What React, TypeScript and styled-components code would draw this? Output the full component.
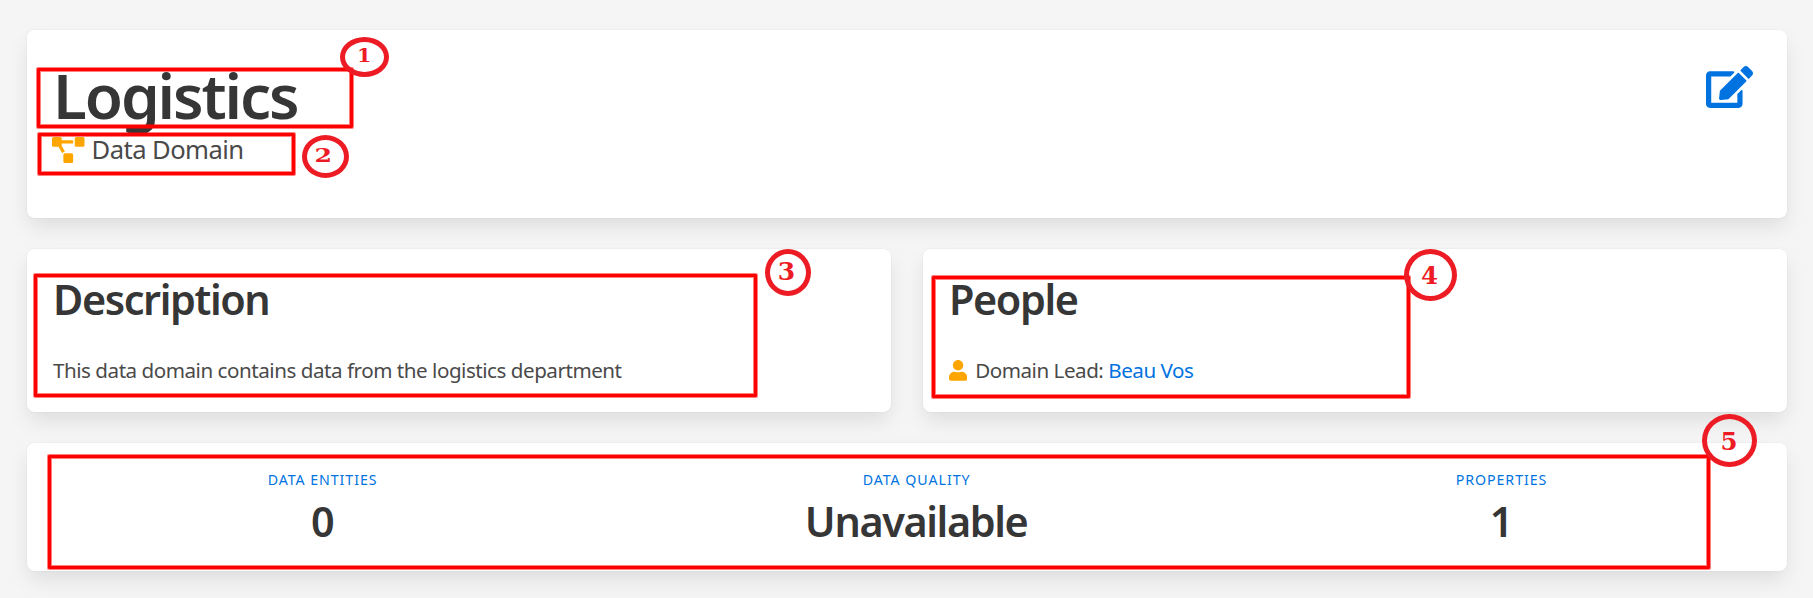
import React from 'react';
import styled, { createGlobalStyle } from 'styled-components';
import { FaEdit, FaProjectDiagram, FaUser } from 'react-icons/fa';

const GlobalStyle = createGlobalStyle`
  *, *::before, *::after { box-sizing: border-box; }
  html { background: #f5f5f5; }
  body {
    margin: 0;
    font-family: 'Noto Sans', 'Open Sans', sans-serif;
    font-size: 20.6px;
    line-height: 31px;
    color: #4a4a4a;
    overflow: hidden;
  }
  h1, h2, p { margin: 0; }
`;

const Page = styled.main`
  position: relative;
  display: flex;
  flex-direction: column;
  gap: 31px;
  height: 598px;
  padding: 30px 26px 27px 27px;
`;

const Card = styled.section`
  flex: 1;
  min-width: 0;
  padding: 27px 26px 24px;
  border-radius: 7.8px;
  background: #fff;
  box-shadow: 0 10.4px 20.8px -2.6px rgba(10, 10, 10, 0.1), 0 0 0 1px rgba(10, 10, 10, 0.02);
`;

const HeaderCard = styled(Card)`
  display: flex;
  justify-content: space-between;
  flex: 0 0 188px;
  padding: 30px 34px 26px 25px;
`;

const Columns = styled.div`
  display: flex;
  flex: 0 0 163px;
  gap: 32px;
`;

const StatsCard = styled(Card)`
  display: flex;
  flex: 0 0 128px;
  padding-top: 26px;
`;

const PageTitle = styled.h1`
  margin-left: 1px;
  font-size: 62px;
  line-height: 70px;
  font-weight: 600;
  letter-spacing: -2.1px;
  color: #363636;
`;

const Subtitle = styled.p`
  display: flex;
  align-items: center;
  gap: 7px;
  margin-top: 3px;
  font-size: 25.6px;
  line-height: 33px;
  letter-spacing: -0.55px;

  svg {
    width: 32.5px;
    height: 26px;
    color: #ffa500;
  }
`;

const EditLink = styled.a`
  height: 42px;
  margin-top: 6px;
  color: #0073e0;

  svg {
    display: block;
    width: 47px;
    height: 42px;
  }
`;

const Heading = styled.h2`
  font-size: 41.4px;
  line-height: 47px;
  font-weight: 600;
  letter-spacing: -1.4px;
  color: #363636;
`;

const Text = styled.p`
  display: flex;
  align-items: center;
  gap: 8px;
  margin-top: 32px;
  letter-spacing: -0.47px;

  svg {
    width: 18.2px;
    height: 20.8px;
    color: #ffa500;
  }
`;

const Person = styled.a`
  color: #0073e0;
`;

const Stat = styled.div`
  flex: 1 1 auto;
  text-align: center;
`;

const StatLabel = styled.p`
  padding-left: 1px;
  font-size: 14.2px;
  line-height: 22px;
  letter-spacing: 0.95px;
  color: #0073e0;
`;

const StatValue = styled(Heading).attrs({ as: 'p' })`
  margin-top: 7px;
`;

const Frame = styled.div<{ $x: number; $y: number; $w: number; $h: number }>`
  position: absolute;
  left: ${(p) => p.$x}px;
  top: ${(p) => p.$y}px;
  width: ${(p) => p.$w}px;
  height: ${(p) => p.$h}px;
  border: 3px solid #f00;
  border-radius: 1px;
  box-shadow: 0 0 0 1px rgba(255, 0, 0, 0.5), inset 0 0 0 1px rgba(255, 0, 0, 0.5);
`;

const Marker = styled.div<{ $x: number; $y: number; $w: number; $h: number }>`
  position: absolute;
  left: ${(p) => p.$x}px;
  top: ${(p) => p.$y}px;
  display: flex;
  align-items: center;
  justify-content: center;
  width: ${(p) => p.$w}px;
  height: ${(p) => p.$h}px;
  border: 5px solid #ed1c24;
  border-radius: 50%;
`;

const Digit = styled.span<{ $size: number; $stretch: number; $dx: number; $dy: number }>`
  font: bold ${(p) => p.$size}px/1 'DejaVu Serif', serif;
  color: #ed1c24;
  transform: translate(${(p) => p.$dx}px, ${(p) => p.$dy}px) scaleX(${(p) => p.$stretch});
`;

const frames = [
  { x: 37, y: 68, w: 316, h: 60 },
  { x: 38, y: 133, w: 257, h: 42 },
  { x: 34, y: 274, w: 723, h: 123 },
  { x: 932, y: 276, w: 478, h: 122 },
  { x: 48, y: 455, w: 1662, h: 114 },
];

const markers = [
  { n: 1, x: 340, y: 37, w: 49, h: 40, size: 18, stretch: 1.15, dx: 0, dy: -1 },
  { n: 2, x: 302, y: 135, w: 47, h: 43, size: 18, stretch: 1.4, dx: -2, dy: -1 },
  { n: 3, x: 765, y: 249, w: 46, h: 47, size: 24.5, stretch: 1.02, dx: -1, dy: 0 },
  { n: 4, x: 1404, y: 249, w: 53, h: 52, size: 24.5, stretch: 1, dx: -1, dy: 0.5 },
  { n: 5, x: 1702, y: 414, w: 55, h: 53, size: 24.5, stretch: 1, dx: -0.5, dy: 2 },
];

const stats = [
  { label: 'DATA ENTITIES', value: '0' },
  { label: 'DATA QUALITY', value: 'Unavailable' },
  { label: 'PROPERTIES', value: '1' },
];

export default function App() {
  return (
    <>
      <GlobalStyle />
      <Page>
        <HeaderCard>
          <div>
            <PageTitle>Logistics</PageTitle>
            <Subtitle>
              <FaProjectDiagram />
              Data Domain
            </Subtitle>
          </div>
          <EditLink aria-label="Edit">
            <FaEdit />
          </EditLink>
        </HeaderCard>

        <Columns>
          <Card>
            <Heading>Description</Heading>
            <Text>This data domain contains data from the logistics department</Text>
          </Card>
          <Card>
            <Heading>People</Heading>
            <Text>
              <FaUser />
              <span>
                Domain Lead: <Person>Beau Vos</Person>
              </span>
            </Text>
          </Card>
        </Columns>

        <StatsCard>
          {stats.map((s) => (
            <Stat key={s.label}>
              <StatLabel>{s.label}</StatLabel>
              <StatValue>{s.value}</StatValue>
            </Stat>
          ))}
        </StatsCard>

        {frames.map((f) => (
          <Frame key={f.y} $x={f.x} $y={f.y} $w={f.w} $h={f.h} />
        ))}
        {markers.map((m) => (
          <Marker key={m.n} $x={m.x} $y={m.y} $w={m.w} $h={m.h}>
            <Digit $size={m.size} $stretch={m.stretch} $dx={m.dx} $dy={m.dy}>
              {m.n}
            </Digit>
          </Marker>
        ))}
      </Page>
    </>
  );
}
